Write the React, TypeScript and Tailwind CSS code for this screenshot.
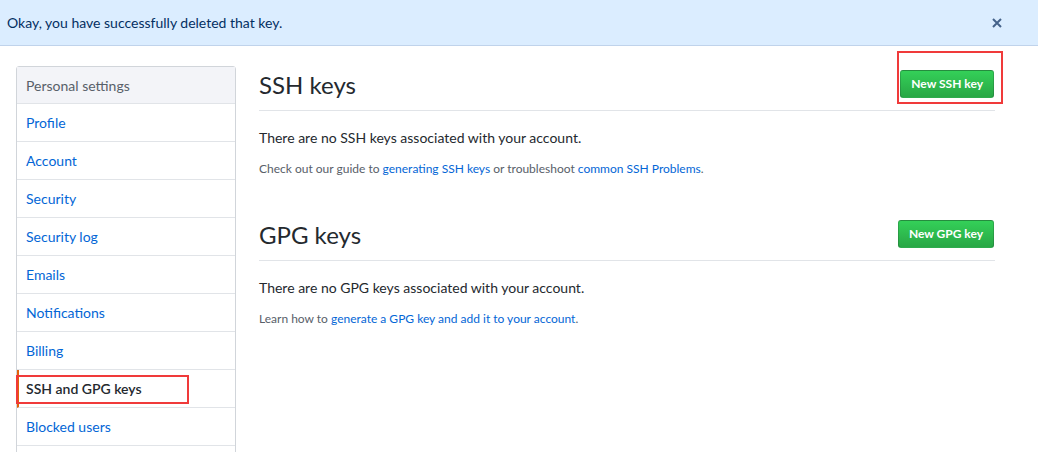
import React from "react";

const navItems = [
  "Profile",
  "Account",
  "Security",
  "Security log",
  "Emails",
  "Notifications",
  "Billing",
  "SSH and GPG keys",
  "Blocked users",
];

function GreenButton({ label }: { label: string }) {
  return (
    <button className="h-[28px] px-[10px] rounded-[3px] border border-[#1b1f2333] bg-gradient-to-b from-[#34d058] to-[#28a745] text-white text-[12px] font-bold leading-none">
      {label}
    </button>
  );
}

export default function App() {
  return (
    <div
      className="w-[1038px] h-[452px] overflow-hidden bg-white text-[#24292e] relative"
      style={{ fontFamily: "Lato, 'Noto Sans', sans-serif" }}
    >
      <div className="h-[46px] bg-[#dbedff] border-b border-[#c0d3eb] flex items-center justify-between pl-[7px] pr-[36px]">
        <span className="text-[14px] text-[#032f62]">Okay, you have successfully deleted that key.</span>
        <svg width="10" height="10" viewBox="0 0 10 10" className="text-[#44628a]">
          <path d="M1 1 L9 9 M9 1 L1 9" stroke="currentColor" strokeWidth="2" />
        </svg>
      </div>

      <div className="flex pl-[16px] pt-[20px] gap-[23px]">
        <nav className="w-[220px] shrink-0 border border-[#d1d5da] rounded-t-[3px] text-[14px]">
          <div className="h-[37px] flex items-center pl-[9px] bg-[#f3f4f8] border-b border-[#e1e4e8] text-[#586069]">
            Personal settings
          </div>
          {navItems.map((item) => {
            const active = item === "SSH and GPG keys";
            return (
              <div
                key={item}
                className={
                  active
                    ? "h-[38px] flex items-center pl-[7px] border-l-[2px] border-l-[#e36209] border-b border-b-[#e1e4e8] text-[#24292e] font-semibold"
                    : "h-[38px] flex items-center pl-[9px] border-b border-[#e1e4e8] text-[#0366d6]"
                }
              >
                {item}
              </div>
            );
          })}
          <div className="h-[38px]" />
        </nav>

        <main className="w-[736px]">
          <div className="flex items-end justify-between border-b border-[#e1e4e8] pb-[10px] pt-[4px]">
            <h2 className="text-[24px] leading-[30px]">SSH keys</h2>
            <div className="mr-[1px] mb-[2px]">
              <GreenButton label="New SSH key" />
            </div>
          </div>
          <p className="text-[14px] mt-[16px]">There are no SSH keys associated with your account.</p>
          <p className="text-[12px] mt-[12px] text-[#586069]">
            Check out our guide to <span className="text-[#0366d6]">generating SSH keys</span> or troubleshoot{" "}
            <span className="text-[#0366d6]">common SSH Problems</span>.
          </p>

          <div className="flex items-end justify-between border-b border-[#e1e4e8] pb-[10px] mt-[42px]">
            <h2 className="text-[24px] leading-[30px]">GPG keys</h2>
            <div className="mr-[1px] mb-[2px]">
              <GreenButton label="New GPG key" />
            </div>
          </div>
          <p className="text-[14px] mt-[16px]">There are no GPG keys associated with your account.</p>
          <p className="text-[12px] mt-[12px] text-[#586069]">
            Learn how to <span className="text-[#0366d6]">generate a GPG key and add it to your account</span>.
          </p>
        </main>
      </div>

      <div className="absolute left-[897px] top-[51px] w-[106px] h-[53px] border-[2px] border-[#f03a3a]" />
      <div className="absolute left-[16px] top-[375px] w-[173px] h-[29px] border-[2px] border-[#f03a3a]" />
    </div>
  );
}
